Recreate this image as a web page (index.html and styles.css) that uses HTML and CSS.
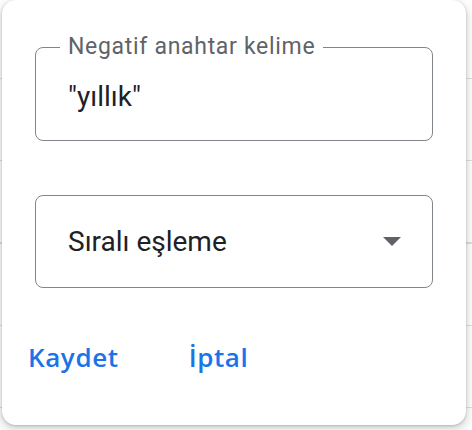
FILE: index.html
```html
<!DOCTYPE html>
<html lang="tr">
<head>
<meta charset="utf-8">
<link rel="stylesheet" href="styles.css">
</head>
<body>
<div class="card">
  <div class="field">
    <span class="field-label">Negatif anahtar kelime</span>
    <span class="field-value">"yıllık"</span>
  </div>
  <div class="field select">
    <span class="field-value">Sıralı eşleme</span>
    <svg class="arrow" width="18" height="9" viewBox="0 0 18 9"><path d="M0 0 L18 0 L9 9 Z" fill="#5f6368"/></svg>
  </div>
  <div class="actions">
    <button class="btn">Kaydet</button>
    <button class="btn">İptal</button>
  </div>
</div>
</body>
</html>
```
FILE: styles.css
```css
html, body {
  margin: 0;
  padding: 0;
}
body {
  width: 472px;
  height: 430px;
  overflow: hidden;
  background-color: #fff;
  background-image: repeating-linear-gradient(to bottom, transparent 0, transparent 81px, #dedede 81px, #dedede 82.25px);
  background-position: 0 -3px;
  font-family: Roboto, "Noto Sans", sans-serif;
}
.card {
  box-sizing: border-box;
  width: 464px;
  height: 425px;
  margin-left: 2px;
  background: #fff;
  border-radius: 14px;
  box-shadow: 0 1px 3px rgba(60,64,67,.3), 0 4px 8px 3px rgba(60,64,67,.15);
  padding: 47px 33px 0 33px;
  display: flex;
  flex-direction: column;
}
.field {
  position: relative;
  box-sizing: border-box;
  height: 94px;
  border: 1.5px solid #80868b;
  border-radius: 8px;
  display: flex;
  align-items: center;
  padding: 0 31px 0 32px;
}
.field-label {
  position: absolute;
  left: 24px;
  top: -16px;
  padding: 0 8px;
  background: #fff;
  font-size: 23px;
  letter-spacing: 0.7px;
  line-height: 30px;
  color: #5f6368;
}
.field-value {
  font-size: 28px;
  color: #202124;
  flex: 1;
}
.field:first-child .field-value {
  margin-top: 4px;
}
.select {
  margin-top: 54px;
  height: 93px;
}
.arrow {
  display: block;
}
.actions {
  display: flex;
  gap: 38px;
  margin: 39px 0 0 -23px;
}
.btn {
  border: none;
  background: none;
  padding: 0 16px;
  height: 60px;
  font-family: "Open Sans", Roboto, sans-serif;
  font-weight: 600;
  font-size: 26px;
  letter-spacing: 0.6px;
  color: #1a73e8;
}
```
